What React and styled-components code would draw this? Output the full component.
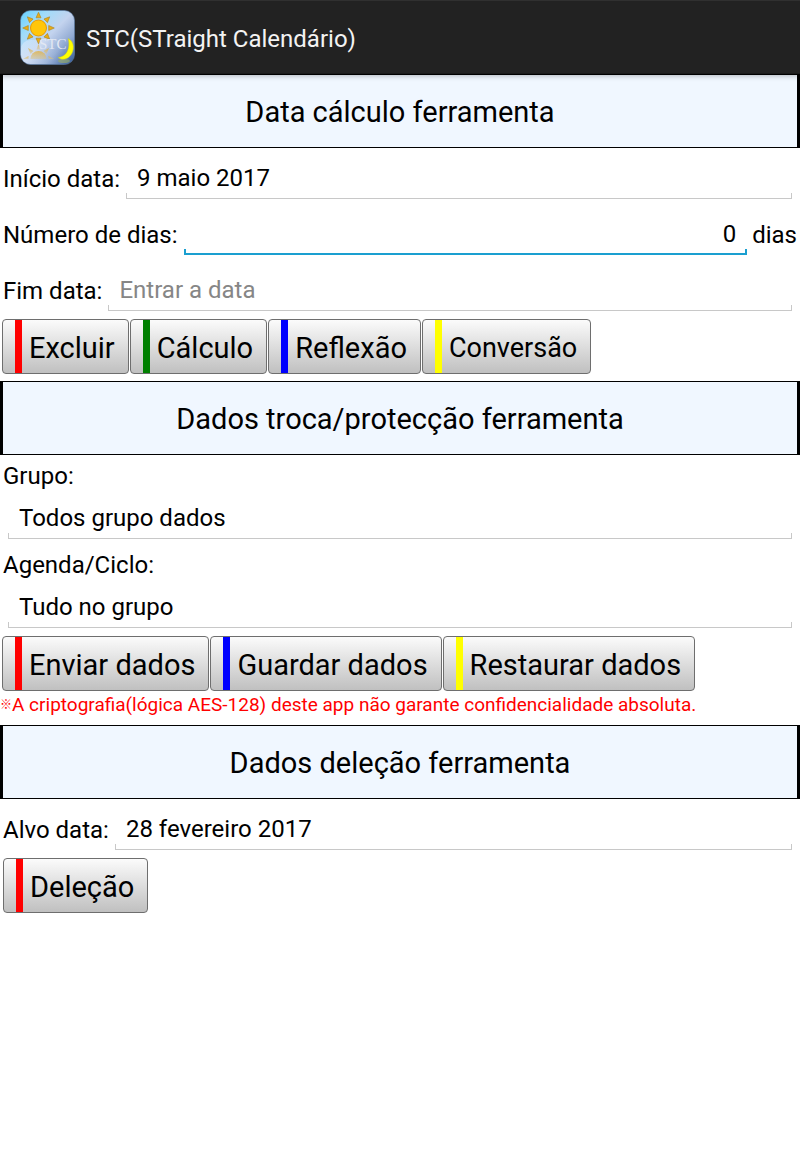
import React from 'react';
import styled, { createGlobalStyle, css } from 'styled-components';

const GlobalStyle = createGlobalStyle`
  *, *::before, *::after {
    box-sizing: border-box;
  }

  body {
    margin: 0;
    background: #fff;
    color: #000;
    font-family: Roboto, "Noto Sans CJK JP", sans-serif;
    font-size: 24px;
  }
`;

const Page = styled.div`
  display: flex;
  flex-direction: column;
`;

const ActionBar = styled.header`
  position: relative;
  display: flex;
  align-items: center;
  gap: 11px;
  height: 74px;
  padding: 0 20px;
  background: #222;
  border-top: 1px solid #303030;
  border-bottom: 1px solid #1a1a1a;
  box-shadow: 0 1px 6px rgba(0, 0, 0, 0.35);
`;

const AppTitle = styled.h1`
  margin: 0;
  padding-top: 4px;
  color: #f3f3f3;
  font-size: 24px;
  font-weight: 400;
  line-height: 28px;
`;

const SectionTitle = styled.h2`
  display: flex;
  align-items: center;
  justify-content: center;
  height: 74px;
  margin: 0;
  padding-top: 2px;
  border: solid #000;
  border-width: 1px 3px;
  background: #f0f7ff;
  font-size: 29px;
  font-weight: 400;
`;

const Form = styled.form`
  display: flex;
  flex-direction: column;
  padding: 3px 0 7px;
`;

const FieldRow = styled.div`
  display: flex;
  align-items: center;
  height: 56px;
  padding: 0 ${(props) => (props.$suffix ? '3px' : '8px')} 0 3px;
  gap: 5px;
`;

const Label = styled.label`
  flex: none;
  padding-right: 1px;
  line-height: 28px;
`;

const BlockLabel = styled.label`
  padding: 4px 3px 0;
  line-height: 29px;
`;

const BlockField = styled.div`
  display: flex;
  align-items: center;
  height: 56px;
  padding: 0 8px;
`;

// Holo style underline: a thin line with a short tick at each end
const underline = css`
  background:
    linear-gradient(var(--line), var(--line)) left bottom / 100% var(--weight) no-repeat,
    linear-gradient(var(--line), var(--line)) left bottom / var(--weight) 6px no-repeat,
    linear-gradient(var(--line), var(--line)) right bottom / var(--weight) 6px no-repeat;
`;

const Input = styled.input`
  --line: ${(props) => (props.$active ? '#1a9fd0' : '#c8c8c8')};
  --weight: ${(props) => (props.$active ? '2px' : '1px')};
  ${underline}
  flex: 1;
  min-width: 0;
  height: 40px;
  padding: 0 11px 2px;
  border: 0;
  outline: 0;
  color: #000;
  font: inherit;
  text-align: ${(props) => props.$align || 'left'};

  &::placeholder {
    color: #868686;
    opacity: 1;
  }
`;

const ButtonRow = styled.div`
  display: flex;
  flex-wrap: wrap;
  gap: 1px;
  padding-left: ${(props) => props.$inset || '2px'};
`;

const StripeButton = styled.button`
  display: flex;
  align-items: center;
  gap: 7px;
  height: 55px;
  padding: 0 13px 0 12px;
  border: 1px solid #6e6e6e;
  border-radius: 4px;
  background: linear-gradient(#fbfbfb, #c0c0c0);
  color: #000;
  font-family: inherit;
  font-size: ${(props) => (props.$small ? '27px' : '29px')};

  &::before {
    content: '';
    align-self: stretch;
    width: 7px;
    background: ${(props) => props.$stripe};
  }
`;

const ButtonText = styled.span`
  padding-top: 2px;
`;

const Notice = styled.p`
  display: flex;
  align-items: center;
  margin: 0;
  padding-top: 1px;
  color: #f00;
  font-size: 19px;
  line-height: 26px;
`;

const NoticeMark = styled.span`
  font-size: 12px;
  font-weight: 700;
`;

const rays = [0, 45, 90, 135, 180, 225, 270, 315];

const AppIcon = () => (
  <svg width="55" height="55" viewBox="0 0 55 55" aria-hidden="true">
    <defs>
      <linearGradient id="sky" x1="0" y1="0" x2="1" y2="1">
        <stop offset="0" stopColor="#62d0ff" />
        <stop offset="0.25" stopColor="#a0dcfa" />
        <stop offset="0.5" stopColor="#c3d3ee" />
        <stop offset="0.72" stopColor="#90a9d2" />
        <stop offset="1" stopColor="#2c5394" />
      </linearGradient>
      <linearGradient id="ground" x1="0" y1="0" x2="1" y2="0">
        <stop offset="0" stopColor="#eaf2ff" stopOpacity="0.45" />
        <stop offset="0.8" stopColor="#eaf2ff" stopOpacity="0" />
      </linearGradient>
      <linearGradient id="fade" x1="0" y1="0" x2="0" y2="1">
        <stop offset="0" stopColor="#e2b03c" stopOpacity="0.8" />
        <stop offset="1" stopColor="#d8c48a" stopOpacity="0.5" />
      </linearGradient>
    </defs>
    <rect x="0.5" y="0.5" width="54" height="54" rx="10" fill="url(#sky)" stroke="#5d7fa8" strokeOpacity="0.6" />
    <rect x="1" y="30" width="53" height="24" rx="9" fill="url(#ground)" />
    <g transform="translate(18.5 18)">
      {rays.map((angle) => (
        <path key={angle} d="M-2.500 -10.200 L0 -15.800 L2.500 -10.200 Z" fill="#e9ad14" stroke="#a98220" strokeWidth="0.6" transform={`rotate(${angle})`} />
      ))}
      <circle r="8" fill="#ffc60a" stroke="#e69a09" />
    </g>
    <g fill="url(#fade)">
      <path d="M10.500 49 A8 8 0 0 1 26.500 49 Z" />
      <path d="M16.500 39.500 L18.500 34 L20.500 39.500 Z" />
      <path d="M8 38 L13.500 41 L10.500 44 Z" />
      <path d="M29 38 L23.500 41 L26.500 44 Z" />
      <path d="M3 49 L8.500 46 L8.500 49 Z" />
      <path d="M34 49 L28.500 46 L28.500 49 Z" />
    </g>
    <ellipse cx="44" cy="51" rx="6" ry="2" fill="#9fb060" fillOpacity="0.6" />
    <text x="19" y="39" fill="#e2e8f3" fontFamily="Liberation Serif, serif" fontSize="15">STC</text>
    <path d="M48 28.500 C54.500 31 55 41 50 46 C47 49.500 41.500 50.500 38 47.500 C43.500 47 47 43.500 48.300 38.500 C49.200 34.500 49 31.500 48 28.500 Z" fill="#ffff00" stroke="#c3c72c" strokeWidth="0.5" />
  </svg>
);

const Field = ({ id, label, suffix, ...rest }) => (
  <FieldRow $suffix={suffix}>
    <Label htmlFor={id}>{label}</Label>
    <Input id={id} type="text" {...rest} />
    {suffix && <span>{suffix}</span>}
  </FieldRow>
);

const Action = ({ stripe, small, children }) => (
  <StripeButton type="button" $stripe={stripe} $small={small}>
    <ButtonText>{children}</ButtonText>
  </StripeButton>
);

const App = () => (
  <Page>
    <GlobalStyle />
    <ActionBar>
      <AppIcon />
      <AppTitle>STC(STraight Calendário)</AppTitle>
    </ActionBar>

    <main>
      <SectionTitle>Data cálculo ferramenta</SectionTitle>
      <Form>
        <Field id="start" label="Início data:" defaultValue="9 maio 2017" />
        <Field id="days" label="Número de dias:" suffix="dias" inputMode="numeric" defaultValue="0" $align="right" $active />
        <Field id="end" label="Fim data:" placeholder="Entrar a data" />
        <ButtonRow>
          <Action stripe="#f00">Excluir</Action>
          <Action stripe="#008000">Cálculo</Action>
          <Action stripe="#00f">Reflexão</Action>
          <Action stripe="#ff0" small>Conversão</Action>
        </ButtonRow>
      </Form>

      <SectionTitle>Dados troca/protecção ferramenta</SectionTitle>
      <Form>
        <BlockLabel htmlFor="group">Grupo:</BlockLabel>
        <BlockField>
          <Input id="group" type="text" defaultValue="Todos grupo dados" />
        </BlockField>
        <BlockLabel htmlFor="agenda">Agenda/Ciclo:</BlockLabel>
        <BlockField>
          <Input id="agenda" type="text" defaultValue="Tudo no grupo" />
        </BlockField>
        <ButtonRow>
          <Action stripe="#f00">Enviar dados</Action>
          <Action stripe="#00f">Guardar dados</Action>
          <Action stripe="#ff0">Restaurar dados</Action>
        </ButtonRow>
        <Notice>
          <NoticeMark>※</NoticeMark>
          A criptografia(lógica AES-128) deste app não garante confidencialidade absoluta.
        </Notice>
      </Form>

      <SectionTitle>Dados deleção ferramenta</SectionTitle>
      <Form>
        <Field id="target" label="Alvo data:" defaultValue="28 fevereiro 2017" />
        <ButtonRow $inset="3px">
          <Action stripe="#f00">Deleção</Action>
        </ButtonRow>
      </Form>
    </main>
  </Page>
);

export default App;
